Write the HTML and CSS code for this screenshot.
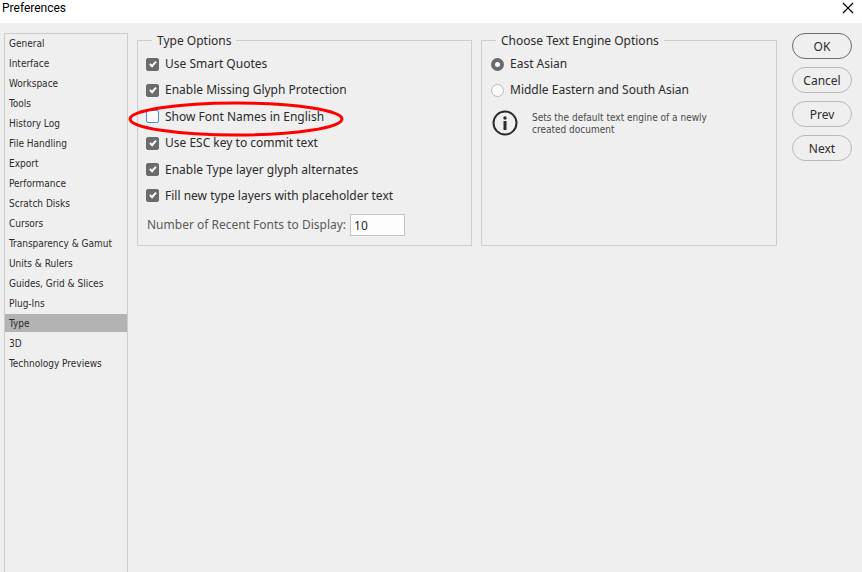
FILE: index.html
```html
<!DOCTYPE html>
<html lang="en">
<head>
  <meta charset="UTF-8" />
  <meta name="viewport" content="width=device-width, initial-scale=1.0"/>
  <title>Preferences</title>
  <link rel="stylesheet" href="styles.css">
</head>
<body>
  <header class="titlebar">
    <h1>Preferences</h1>
    <button class="close" type="button" aria-label="Close">
      <svg width="12" height="12" viewBox="0 0 12 12"><path d="M1 1L11 11M11 1L1 11" /></svg>
    </button>
  </header>

  <form class="dialog">
    <nav class="sidebar">
      <a href="#general">General</a>
      <a href="#interface">Interface</a>
      <a href="#workspace">Workspace</a>
      <a href="#tools">Tools</a>
      <a href="#history">History Log</a>
      <a href="#files">File Handling</a>
      <a href="#export">Export</a>
      <a href="#performance">Performance</a>
      <a href="#scratch">Scratch Disks</a>
      <a href="#cursors">Cursors</a>
      <a href="#transparency">Transparency &amp; Gamut</a>
      <a href="#units">Units &amp; Rulers</a>
      <a href="#guides">Guides, Grid &amp; Slices</a>
      <a href="#plugins">Plug-Ins</a>
      <a href="#type" class="active">Type</a>
      <a href="#3d">3D</a>
      <a href="#previews">Technology Previews</a>
    </nav>

    <main class="panels">
      <fieldset class="type-options">
        <legend>Type Options</legend>
        <div class="checks">
          <label class="option"><input type="checkbox" checked />Use Smart Quotes</label>
          <label class="option"><input type="checkbox" checked />Enable Missing Glyph Protection</label>
          <label class="option marked"><input type="checkbox" />Show Font Names in English
            <svg class="ring" width="216" height="36" viewBox="0 0 216 36"><ellipse cx="108" cy="18" rx="106" ry="16" /></svg>
          </label>
          <label class="option"><input type="checkbox" checked />Use ESC key to commit text</label>
          <label class="option"><input type="checkbox" checked />Enable Type layer glyph alternates</label>
          <label class="option"><input type="checkbox" checked />Fill new type layers with placeholder text</label>
        </div>
        <div class="recent">
          <label for="recent-fonts">Number of Recent Fonts to Display:</label>
          <input type="text" id="recent-fonts" value="10" />
        </div>
      </fieldset>

      <fieldset class="engine-options">
        <legend>Choose Text Engine Options</legend>
        <div class="radios">
          <label class="option"><input type="radio" name="engine" checked />East Asian</label>
          <label class="option"><input type="radio" name="engine" />Middle Eastern and South Asian</label>
        </div>
        <div class="info">
          <svg width="26" height="26" viewBox="0 0 26 26">
            <circle class="info-ring" cx="13" cy="13" r="11.5" />
            <circle class="info-mark" cx="13" cy="8" r="1.7" />
            <rect class="info-mark" x="11.5" y="11" width="3" height="9" />
          </svg>
          <p>Sets the default text engine of a newly created document</p>
        </div>
      </fieldset>
    </main>

    <div class="buttons">
      <button type="button" class="primary">OK</button>
      <button type="button">Cancel</button>
      <button type="button">Prev</button>
      <button type="button">Next</button>
    </div>
  </form>
</body>
</html>
```
FILE: styles.css
```css
* {
  box-sizing: border-box;
}
body {
  margin: 0;
  min-height: 100vh;
  display: flex;
  flex-direction: column;
  background: #efefef;
  color: #2b2b2b;
  font-family: "Noto Sans", sans-serif;
  font-size: 12px;
  line-height: 16px;
}
button, input {
  font: inherit;
  color: inherit;
}
.titlebar {
  display: flex;
  justify-content: space-between;
  align-items: center;
  height: 23px;
  padding: 0 8px 8px 2px;
  background: #fff;
}
.titlebar h1 {
  margin: 0;
  font-family: Roboto, sans-serif;
  font-size: 12px;
  font-weight: normal;
  color: #000;
}
.close {
  display: flex;
  padding: 0;
  border: 0;
  background: none;
}
.close path {
  stroke: #000;
  stroke-width: 1.2;
}
.dialog {
  flex: 1;
  display: flex;
  gap: 9px;
  padding: 10px 10px 0 4px;
}
.sidebar {
  width: 124px;
  display: flex;
  flex-direction: column;
  gap: 2px;
  border: 1px solid #cdcdcd;
  border-bottom: 0;
  font-family: "DejaVu Sans Condensed", sans-serif;
  font-size: 10px;
  line-height: 16px;
}
.sidebar a {
  padding: 2px 0 0 4px;
  color: inherit;
  text-decoration: none;
  white-space: nowrap;
}
.sidebar .active {
  background: #b3b3b3;
}
.panels {
  flex: 1;
  display: grid;
  grid-template-columns: 335fr 296fr;
  gap: 9px;
  align-items: stretch;
  align-self: flex-start;
}
fieldset {
  margin: 0;
  min-width: 0;
  padding: 8px 8px 9px;
  border: 1px solid #cdcdcd;
}
legend {
  margin-left: 6px;
  padding: 0 5px;
  line-height: 15px;
}
.checks {
  display: flex;
  flex-direction: column;
  justify-content: space-between;
  min-height: 148px;
}
.radios {
  display: grid;
  gap: 10px;
  padding-left: 1px;
}
.option {
  display: flex;
  align-items: center;
  gap: 6px;
  white-space: nowrap;
}
.option input {
  appearance: none;
  width: 13px;
  height: 13px;
  margin: 0;
  border: 1px solid #b9b9b9;
  background: #fafafa;
}
.option input[type="checkbox"] {
  border-color: #4a90e2;
  border-radius: 2px;
}
.option input[type="checkbox"]:checked {
  display: flex;
  justify-content: center;
  border-color: #6b6b6b;
  background: #6b6b6b;
}
.option input[type="checkbox"]:checked::before {
  content: "";
  width: 2px;
  height: 5px;
  margin-top: 1px;
  border: solid #fff;
  border-width: 0 2px 2px 0;
  transform: rotate(42deg);
}
.option input[type="radio"] {
  border-radius: 50%;
}
.option input[type="radio"]:checked {
  border: 4px solid #6b6b6b;
}
.marked {
  position: relative;
}
.ring {
  position: absolute;
  left: -18px;
  top: -8px;
  fill: none;
  stroke: #f00;
  stroke-width: 3;
  pointer-events: none;
}
.recent {
  display: flex;
  align-items: center;
  gap: 4px;
  margin-top: 10px;
  padding-left: 1px;
  color: #5a5a5a;
  white-space: nowrap;
}
.recent input {
  width: 55px;
  height: 22px;
  padding: 0 3px;
  border: 1px solid #c4c4c4;
  background: #fdfdfd;
  color: #2b2b2b;
}
.info {
  display: flex;
  gap: 14px;
  margin-top: 12px;
  padding-left: 2px;
}
.info svg {
  flex: none;
}
.info-ring {
  fill: none;
  stroke: #2b2b2b;
  stroke-width: 2;
}
.info-mark {
  fill: #2b2b2b;
}
.info p {
  margin: 2px 0 0;
  max-width: 180px;
  font-family: "DejaVu Sans Condensed", sans-serif;
  font-size: 10px;
  line-height: 12px;
  color: #4a4a4a;
}
.buttons {
  display: grid;
  gap: 8px;
  align-content: start;
  width: 60px;
  margin-left: 6px;
}
.buttons button {
  height: 26px;
  padding: 2px 0 0;
  border: 1px solid #b9b9b9;
  border-radius: 13px;
  background: none;
}
.buttons .primary {
  border-color: #6b6b6b;
}
```
